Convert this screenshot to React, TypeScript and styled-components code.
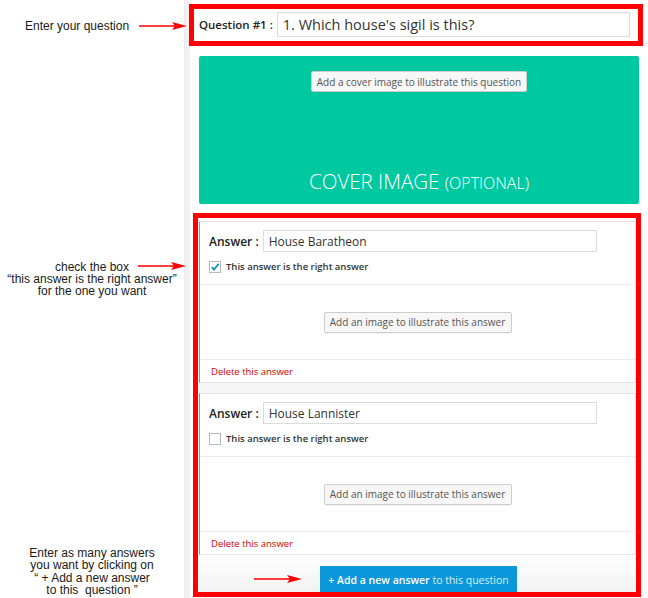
import React from 'react';
import styled, { createGlobalStyle } from 'styled-components';

const GlobalStyle = createGlobalStyle`
  html, body {
    margin: 0;
    padding: 0;
    background: #fff;
  }
  body {
    font-family: 'Open Sans', 'Liberation Sans', sans-serif;
  }
`;

const Page = styled.div`
  display: flex;
  width: 648px;
  height: 598px;
  overflow: hidden;
`;

/* left column with the help notes */
const Notes = styled.aside`
  width: 184px;
  flex-shrink: 0;
  font-family: 'Liberation Sans', Arial, sans-serif;
  font-size: 12px;
  color: #1a1a1a;
`;

const Note = styled.div<{ $top: number; $center?: boolean; $lh?: number }>`
  position: relative;
  margin-top: ${p => p.$top}px;
  padding-left: ${p => (p.$center ? 0 : 25)}px;
  text-align: ${p => (p.$center ? 'center' : 'left')};
  line-height: ${p => p.$lh || 12}px;
  white-space: pre;
`;

const ArrowSpot = styled.div<{ $left: number; $top: number }>`
  position: absolute;
  left: ${p => p.$left}px;
  top: ${p => p.$top}px;
  line-height: 0;
`;

const Strip = styled.div`
  width: 6px;
  flex-shrink: 0;
  background: #f1f1f1;
  border-left: 1px solid #ebebeb;
  box-sizing: border-box;
`;

const Panel = styled.main`
  flex: 1;
  background: #fff;
  display: flex;
  flex-direction: column;
`;

const Highlight = styled.div<{ $inset: string }>`
  position: absolute;
  inset: ${p => p.$inset};
  border: 5px solid #ff0000;
  pointer-events: none;
  z-index: 2;
`;

const QuestionHeader = styled.div`
  position: relative;
  display: flex;
  align-items: center;
  height: 44px;
  box-sizing: border-box;
  padding: 5px 18px 0 9px;
  border-bottom: 1px solid #e8e8e8;
`;

const FieldLabel = styled.label<{ $size?: number }>`
  font-size: ${p => p.$size || 12}px;
  font-weight: 600;
  color: #222;
  white-space: nowrap;
  margin-right: 4px;
`;

const TextInput = styled.input<{ $size: number; $height: number }>`
  flex: 1;
  min-width: 0;
  height: ${p => p.$height}px;
  box-sizing: border-box;
  border: 1px solid #dcdcdc;
  padding: 0 5px;
  font-family: 'Open Sans', sans-serif;
  font-size: ${p => p.$size}px;
  color: #333;
  background: #fff;
  outline: none;
`;

const Cover = styled.section`
  margin: 12px 9px 0 9px;
  height: 148px;
  border-radius: 2px;
  background: #00c9a2;
  display: flex;
  flex-direction: column;
  align-items: center;
  justify-content: space-between;
  padding: 15px 0 10px;
  box-sizing: border-box;
`;

const GhostButton = styled.button<{ $w: number }>`
  width: ${p => p.$w}px;
  height: 21px;
  padding: 0;
  border: 1px solid #cccccc;
  border-radius: 2px;
  background: #f7f7f7;
  color: #555;
  font-family: 'Open Sans', sans-serif;
  font-size: 10px;
  box-shadow: 0 1px 0 rgba(0, 0, 0, 0.04);
`;

const CoverTitle = styled.div`
  color: #fff;
  font-family: 'Open Sans', sans-serif;
  font-weight: 300;
  font-size: 20.5px;
  line-height: 22px;

  small {
    font-size: 16px;
  }
`;

const AnswersBox = styled.section`
  position: relative;
  margin: 17px 12px 0 9px;
`;

const AnswerList = styled.div`
  display: flex;
  flex-direction: column;
  gap: 10px;
  background: #f7f7f7;
`;

const AnswerCard = styled.div`
  background: #fff;
  border: 1px solid #e5e5e5;
  border-left-color: #59a9dc;
`;

const AnswerTop = styled.div`
  padding: 8px 38px 11px 9px;
`;

const InputRow = styled.div`
  display: flex;
  align-items: center;
`;

const CheckRow = styled.div`
  display: flex;
  align-items: center;
  gap: 5px;
  margin-top: 8px;
  font-size: 9.5px;
  font-weight: 600;
  color: #333;
`;

const CheckBox = styled.span<{ $on?: boolean }>`
  width: 12px;
  height: 12px;
  box-sizing: border-box;
  border: 1px solid #b4b9be;
  background: #fff;
  display: flex;
  align-items: center;
  justify-content: center;
`;

const ImageArea = styled.div`
  height: 74px;
  border-top: 1px solid #eeeeee;
  display: flex;
  align-items: center;
  justify-content: center;
`;

const DeleteRow = styled.div`
  height: 22px;
  border-top: 1px solid #eeeeee;
  display: flex;
  align-items: center;
  padding-left: 11px;
  font-size: 9.5px;
  color: #d40000;
`;

const Footer = styled.div`
  display: flex;
  align-items: flex-start;
  height: 40px;
  padding: 11px 0 0 55px;
  box-sizing: border-box;
  overflow: hidden;
  background: linear-gradient(to bottom, #ffffff, #f1f1f1);
`;

const ArrowBox = styled.div`
  margin-top: 8px;
  margin-right: 18px;
  line-height: 0;
`;

const PrimaryButton = styled.button`
  width: 197px;
  height: 30px;
  border: none;
  padding: 0 0 3px;
  background: #0b97d9;
  color: #fff;
  font-family: 'Open Sans', sans-serif;
  font-size: 10.5px;

  b {
    font-weight: 600;
  }
  span {
    color: #d8eefa;
  }
`;

const Arrow = () => (
  <svg width="48" height="10" viewBox="0 0 48 10">
    <line x1="0" y1="5" x2="40" y2="5" stroke="#ff0000" strokeWidth="1.6" />
    <polygon points="33,1 48,5 33,9 36,5" fill="#ff0000" />
  </svg>
);

const Check = () => (
  <svg width="10" height="10" viewBox="0 0 10 10">
    <path d="M1.8 5.2 L4 7.6 L8.6 1.8" fill="none" stroke="#1e8cbe" strokeWidth="1.8" />
  </svg>
);

const Answer = ({ value, right }: { value: string; right?: boolean }) => (
  <AnswerCard>
    <AnswerTop>
      <InputRow>
        <FieldLabel>Answer :</FieldLabel>
        <TextInput $size={12} $height={22} defaultValue={value} readOnly />
      </InputRow>
      <CheckRow>
        <CheckBox $on={right}>{right && <Check />}</CheckBox>
        This answer is the right answer
      </CheckRow>
    </AnswerTop>
    <ImageArea>
      <GhostButton $w={188}>Add an image to illustrate this answer</GhostButton>
    </ImageArea>
    <DeleteRow>Delete this answer</DeleteRow>
  </AnswerCard>
);

const App = () => {
  return (
    <Page>
      <GlobalStyle />
      <Notes>
        <Note $top={20}>
          Enter your question
          <ArrowSpot $left={139} $top={1}>
            <Arrow />
          </ArrowSpot>
        </Note>
        <Note $top={229} $center>
          {'check the box\n\u201cthis answer is the right answer\u201d\nfor the one you want'}
          <ArrowSpot $left={138} $top={0}>
            <Arrow />
          </ArrowSpot>
        </Note>
        <Note $top={250} $center $lh={12.3}>
          {'Enter as many answers\nyou want by clicking on\n\u201c + Add a new answer\nto this  question \u201d'}
        </Note>
      </Notes>
      <Strip />
      <Panel>
        <QuestionHeader>
          <Highlight $inset="4px 5px -3px -1px" />
          <FieldLabel $size={11.5}>Question #1 :</FieldLabel>
          <TextInput $size={14.5} $height={25} defaultValue="1. Which house's sigil is this?" readOnly />
        </QuestionHeader>
        <Cover>
          <GhostButton $w={216}>Add a cover image to illustrate this question</GhostButton>
          <CoverTitle>
            COVER IMAGE <small>(OPTIONAL)</small>
          </CoverTitle>
        </Cover>
        <AnswersBox>
          <Highlight $inset="-8px -5px -2px -6px" />
          <AnswerList>
            <Answer value="House Baratheon" right />
            <Answer value="House Lannister" />
          </AnswerList>
          <Footer>
            <ArrowBox>
              <Arrow />
            </ArrowBox>
            <PrimaryButton>
              <b>+ Add a new answer</b> <span>to this question</span>
            </PrimaryButton>
          </Footer>
        </AnswersBox>
      </Panel>
    </Page>
  );
};

export default App;
